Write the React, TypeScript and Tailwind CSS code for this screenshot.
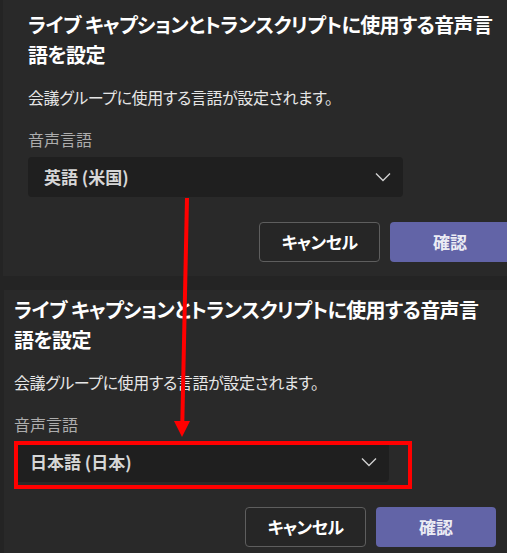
const font = "font-['Noto_Sans_CJK_JP','Noto_Sans',sans-serif] [font-feature-settings:'palt']"

function Chevron() {
  return (
    <svg width="16" height="10" viewBox="0 0 16 10" fill="none" className="text-[#d0d0d0]">
      <polyline points="1,1.5 8,8.5 15,1.5" stroke="currentColor" strokeWidth="1.4" />
    </svg>
  )
}

function LanguageDialog({ value, highlight }: { value: string; highlight?: boolean }) {
  return (
    <div className="w-[482px] flex flex-col">
      <h2 className="text-[20px] leading-[30px] font-bold text-white tracking-[-0.6px] whitespace-nowrap">
        ライブ キャプションとトランスクリプトに使用する音声言
        <br />
        語を設定
      </h2>
      <p className="mt-[15px] text-[16px] leading-[24px] text-[#e6e6e6] tracking-[-0.4px]">
        会議グループに使用する言語が設定されます。
      </p>
      <label className="mt-[19px] text-[16px] leading-[22px] text-[#adadad]">音声言語</label>
      <div className="relative mt-[7px] w-[375px]">
        <div className="h-[40px] rounded-[4px] bg-[#1f1f1f] flex items-center justify-between pl-[16px] pr-[12px]">
          <span className="text-[17px] font-bold text-[#d6d6d6]">{value}</span>
          <Chevron />
        </div>
        {highlight && (
          <div className="absolute left-0 top-[-1px] w-[398px] h-[48px] border-4 border-[#ff0000]" />
        )}
      </div>
      <div className="mt-[25px] flex justify-end gap-[10px]">
        <button className="w-[121px] h-[40px] rounded-[4px] border border-[#5e5e5e] bg-[#262626] text-[17px] font-bold text-white tracking-[-0.5px]">
          キャンセル
        </button>
        <button className="w-[120px] h-[40px] rounded-[4px] bg-[#6264a7] text-[17px] font-bold text-[#ececf4]">
          確認
        </button>
      </div>
    </div>
  )
}

export default function App() {
  return (
    <div className={`relative w-[507px] h-[553px] overflow-hidden bg-[#242424] ${font}`}>
      <div className="h-[276px] ml-[3px] pl-[25px] pt-[10px] bg-[#292929] overflow-hidden">
        <LanguageDialog value="英語 (米国)" />
      </div>
      <div className="mt-[14px] h-[263px] ml-[4px] pl-[10px] pt-[5px] bg-[#292929] overflow-hidden">
        <LanguageDialog value="日本語 (日本)" highlight />
      </div>

      {/* red arrow */}
      <svg className="absolute left-0 top-0 pointer-events-none" width="507" height="553">
        <line x1="187" y1="198" x2="182.3" y2="424" stroke="#ff0000" strokeWidth="4" />
        <polygon points="174,421 190,421 182,437" fill="#ff0000" />
      </svg>
    </div>
  )
}
